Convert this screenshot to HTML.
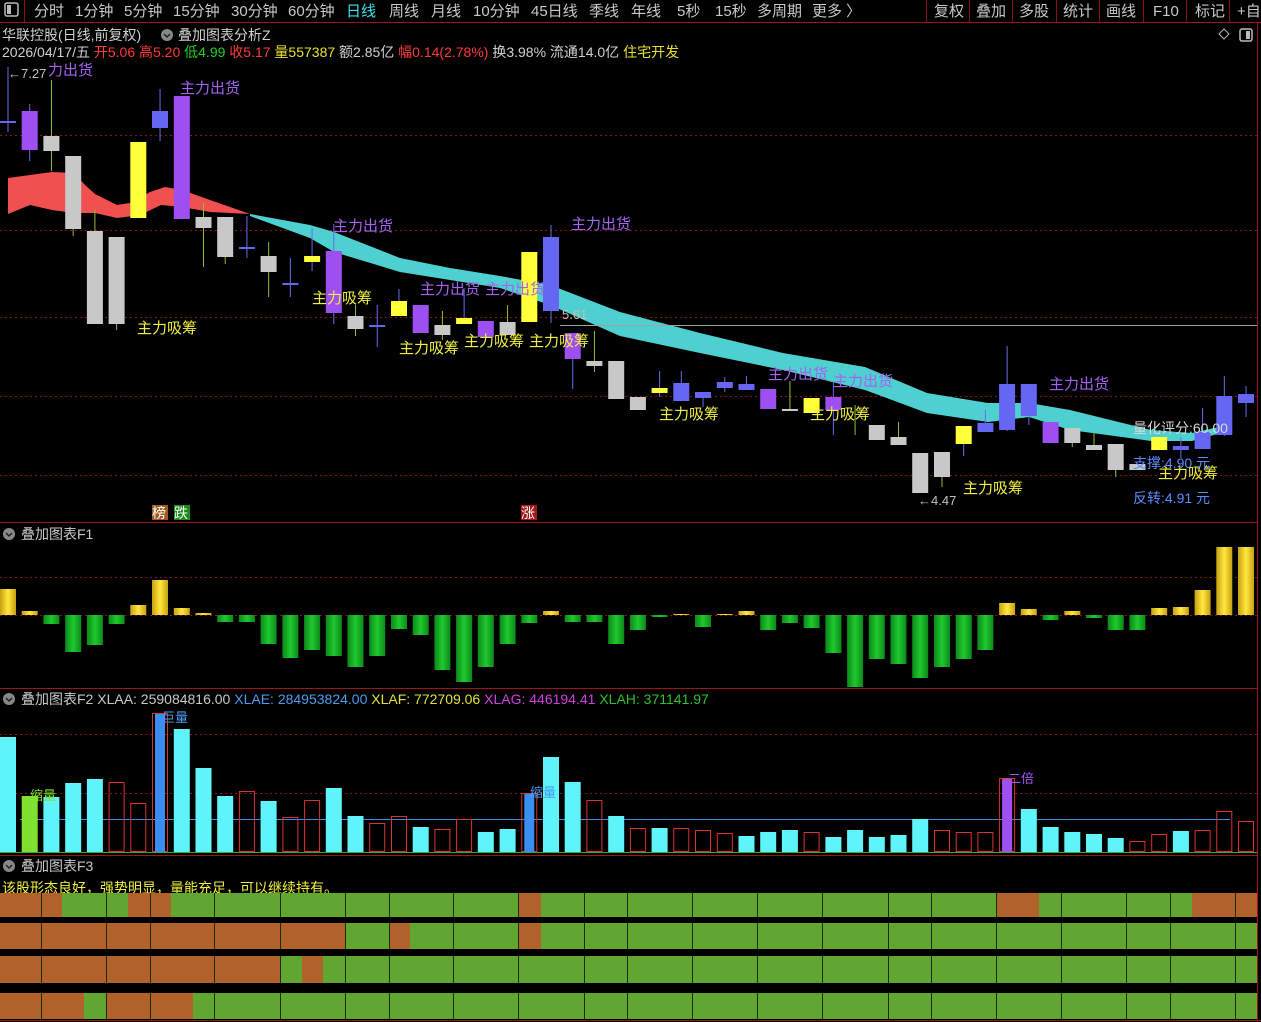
<!DOCTYPE html>
<html><head><meta charset="utf-8">
<style>
html,body{margin:0;padding:0;background:#000;width:1261px;height:1022px;overflow:hidden}
svg{display:block}
text{font-family:"Liberation Sans","Noto Sans CJK SC",sans-serif}
</style></head>
<body>
<svg id="s" width="1261" height="1022" xmlns="http://www.w3.org/2000/svg">
<rect width="1261" height="1022" fill="#000"/>
<!-- toolbar -->
<g font-size="15" fill="#c8c8c8">
<rect x="5" y="3" width="13" height="13" fill="none" stroke="#bbb" stroke-width="1.5" rx="2"/>
<rect x="7" y="5" width="4" height="9" fill="#bbb"/>
<text x="34" y="16">分时</text><text x="75" y="16">1分钟</text><text x="124" y="16">5分钟</text><text x="173" y="16">15分钟</text><text x="231" y="16">30分钟</text><text x="288" y="16">60分钟</text><text x="346" y="16" fill="#40e0f0">日线</text><text x="389" y="16">周线</text><text x="431" y="16">月线</text><text x="473" y="16">10分钟</text><text x="531" y="16">45日线</text><text x="589" y="16">季线</text><text x="631" y="16">年线</text><text x="677" y="16">5秒</text><text x="715" y="16">15秒</text><text x="757" y="16">多周期</text><text x="812" y="16">更多 〉</text>
<text x="934" y="16">复权</text><text x="976" y="16">叠加</text><text x="1019" y="16">多股</text><text x="1063" y="16">统计</text><text x="1106" y="16">画线</text><text x="1153" y="16">F10</text><text x="1195" y="16">标记</text><text x="1237" y="16">+自</text>
</g>
<g stroke="#8a1010" stroke-width="1">
<line x1="24.5" y1="0" x2="24.5" y2="22"/><line x1="926.5" y1="0" x2="926.5" y2="22"/><line x1="969.5" y1="0" x2="969.5" y2="22"/><line x1="1012.5" y1="0" x2="1012.5" y2="22"/><line x1="1056.5" y1="0" x2="1056.5" y2="22"/><line x1="1099.5" y1="0" x2="1099.5" y2="22"/><line x1="1143.5" y1="0" x2="1143.5" y2="22"/><line x1="1186.5" y1="0" x2="1186.5" y2="22"/><line x1="1229.5" y1="0" x2="1229.5" y2="22"/>
<line x1="0" y1="22.5" x2="1261" y2="22.5" stroke="#a01414"/>
<line x1="1257.5" y1="22" x2="1257.5" y2="1022" stroke="#a01414"/>
<line x1="0" y1="522.5" x2="1257" y2="522.5" stroke="#a01414"/>
<line x1="0" y1="688.5" x2="1257" y2="688.5" stroke="#a01414"/>
<line x1="0" y1="855.5" x2="1257" y2="855.5" stroke="#a01414"/>
<line x1="0" y1="1020.5" x2="1261" y2="1020.5" stroke="#a01414"/>
</g>
<g font-size="14">
<text x="2" y="40" fill="#d0d0d0">华联控股(日线,前复权)</text>
<circle cx="167" cy="35" r="6" fill="#888"/><path d="M164 34l3 3 3-3" stroke="#222" stroke-width="1.5" fill="none"/>
<text x="178" y="40" fill="#d0d0d0">叠加图表分析Z</text>
<text x="2" y="57" fill="#d0d0d0">2026/04/17/五 <tspan fill="#ff3a3a">开5.06 高5.20 </tspan><tspan fill="#20d020">低4.99 </tspan><tspan fill="#ff3a3a">收5.17 </tspan><tspan fill="#e8e030">量557387 </tspan><tspan>额2.85亿 </tspan><tspan fill="#ff3a3a">幅0.14(2.78%) </tspan><tspan>换3.98% 流通14.0亿 </tspan><tspan fill="#e8e030">住宅开发</tspan></text>
<path d="M1224 29l5 5-5 5-5-5z" fill="none" stroke="#bbb"/>
<rect x="1240" y="29" width="12" height="12" rx="2" fill="none" stroke="#bbb" stroke-width="1.5"/><rect x="1246" y="31" width="4" height="8" fill="#bbb"/>
</g>
<g id="dyn"></g>
</svg>
<script>
var NS='http://www.w3.org/2000/svg',h='';
function X(i){return 8+i*21.72;}
function r(x,y,w,hh,f,extra){h+='<rect x="'+x.toFixed(1)+'" y="'+y+'" width="'+w+'" height="'+Math.max(hh,1)+'" fill="'+f+'" '+(extra||'')+'/>';}
function ln(x1,y1,x2,y2,c,ex){h+='<line x1="'+x1+'" y1="'+y1+'" x2="'+x2+'" y2="'+y2+'" stroke="'+c+'" '+(ex||'')+'/>';}
function tx(x,y,s,c,fs){h+='<text x="'+x+'" y="'+y+'" fill="'+c+'" font-size="'+(fs||15)+'">'+s+'</text>';}
// grid dotted
[135,230,317,396,475].forEach(function(y){ln(0,y+.5,1257,y+.5,'#8a1414','stroke-dasharray="2,3"');});
[577,615].forEach(function(y){ln(0,y+.5,1257,y+.5,'#8a1414','stroke-dasharray="2,3"');});
[734,793].forEach(function(y){ln(0,y+.5,1257,y+.5,'#8a1414','stroke-dasharray="2,3"');});
// band
h+='<polygon fill="#f05050" points="8,178 30,175 52,172 74,173 85,185 95,194 117,205 130,203 150,192 165,187 182,190 210,200 250,214 210,212 182,207 161,205 140,215 117,218 95,213 74,213 52,210 30,205 8,214"/>';
h+='<polygon fill="#4ecfd0" points="250,214 310,225 334,232 400,258 450,268 500,276 550,285 620,312 700,333 783,353 865,367 927,393 988,403 1029,403 1070,410 1151,430 1192,433 1232,424 1232,430 1192,441 1151,441 1070,430 1029,417 988,422 927,413 865,390 783,370 700,353 620,336 550,305 500,288 450,280 400,272 334,252 310,238 250,216"/>';
ln(560,325.5,1257,325.5,'#a0a0a0');
// candles
var C={W:'#c8c8c8',P:'#9d4ff2',B:'#6566f2',Y:'#ffff3a'};
var WK={W:'#8fbf3a',P:'#6a6af0',B:'#6a6af0',Y:'#6a6af0'};
var K=[['B',122,122,67,132],['P',111,150,104,161],['W',136,151,80,171],['W',156,229,156,236],['W',231,324,210,324],['W',237,324,237,330],['Y',142,218,142,218],['B',111,128,89,141],['P',96,219,96,219],['W',217,228,203,267],['W',217,257,217,264],['B',248,248,216,258],['W',256,272,242,297],['B',284,284,258,297],['Y',256,262,228,271],['P',251,313,224,324],['W',316,329,305,336],['B',326,326,305,347],['Y',301,316,289,316],['P',305,333,305,333],['W',325,335,311,340],['Y',318,324,288,324],['P',321,337,321,337],['W',322,335,305,335],['Y',252,322,252,322],['B',237,311,225,323],['P',333,359,333,389],['W',361,366,331,372],['W',361,399,361,399],['W',397,410,397,410],['Y',388,393,371,397],['B',383,401,371,401],['B',392,398,392,407],['B',382,388,377,392],['B',384,390,376,390],['P',389,409,389,409],['W',410,410,381,410],['Y',398,413,398,413],['P',397,410,381,435],null,['W',425,440,425,440],['W',437,445,422,445],['W',453,493,453,493],['W',452,477,452,487],['Y',426,444,426,456],['B',423,432,410,432],['B',384,430,346,431],['B',384,416,384,425],['P',422,443,422,443],['W',428,443,428,447],['W',445,450,432,450],['W',444,470,444,477],['W',464,470,464,470],['Y',437,450,437,450],['B',446,450,437,458],['B',432,449,408,449],['B',396,435,376,436],['B',394,403,386,417]];
K.forEach(function(k,i){var x=X(i);if(!k){ln(x,405,x,435,'#8fbf3a');return;}
 ln(x,k[3],x,k[4],WK[k[0]]);
 if(k[2]-k[1]<2){r(x-8,k[1]-1,16,2,C[k[0]]);} else r(x-8,k[1],16,k[2]-k[1],C[k[0]]);});
// labels
var pu='#a463f0',ye='#f0f040';
[[48,75,'力出货'],[180,93,'主力出货'],[333,231,'主力出货'],[571,229,'主力出货'],[420,294,'主力出货'],[485,294,'主力出货'],[768,379,'主力出货'],[833,386,'主力出货'],[1049,389,'主力出货']].forEach(function(a){tx(a[0],a[1],a[2],pu);});
[[137,333,'主力吸筹'],[312,303,'主力吸筹'],[399,353,'主力吸筹'],[464,346,'主力吸筹'],[529,346,'主力吸筹'],[659,419,'主力吸筹'],[810,419,'主力吸筹'],[963,493,'主力吸筹'],[1158,478,'主力吸筹']].forEach(function(a){tx(a[0],a[1],a[2],ye);});
tx(8,78,'←7.27','#c0c0c0',13);tx(562,319,'5.61','#c0c0c0',13);tx(918,505,'←4.47','#c0c0c0',13);
tx(1133,433,'量化评分:60.00','#d8d8d8',14);tx(1133,468,'支撑:4.90 元','#5a8cff',14);tx(1133,503,'反转:4.91 元','#5a8cff',14);
r(152,505,16,15,'#a05a20');tx(152,518,'榜','#fff',14);r(174,505,16,15,'#1a8a1a');tx(174,518,'跌','#fff',14);r(521,505,16,15,'#a01818');tx(521,518,'涨','#fff',14);
// panel titles
function ttl(y,s){h+='<circle cx="9" cy="'+(y-5)+'" r="6" fill="#888"/><path d="M6 '+(y-6)+'l3 3 3-3" stroke="#222" stroke-width="1.5" fill="none"/>';tx(21,y,s,'#c8c8c8',14);}
ttl(539,'叠加图表F1');ttl(871,'叠加图表F3');
h+='<text x="21" y="704" font-size="14" fill="#c8c8c8">叠加图表F2 XLAA: 259084816.00 <tspan fill="#4a9cf0">XLAE: 284953824.00 </tspan><tspan fill="#e0e040">XLAF: 772709.06 </tspan><tspan fill="#d040e0">XLAG: 446194.41 </tspan><tspan fill="#30c030">XLAH: 371141.97</tspan></text>';
h+='<circle cx="9" cy="699" r="6" fill="#888"/><path d="M6 698l3 3 3-3" stroke="#222" stroke-width="1.5" fill="none"/>';
// F1
h+='<defs><linearGradient id="gy" x1="0" x2="1"><stop offset="0" stop-color="#c8a010"/><stop offset=".5" stop-color="#ffe840"/><stop offset="1" stop-color="#c8a010"/></linearGradient><linearGradient id="gg" x1="0" x2="1"><stop offset="0" stop-color="#0a8a18"/><stop offset=".5" stop-color="#20c830"/><stop offset="1" stop-color="#0a8a18"/></linearGradient></defs>';
var F1=[589,611,624,652,645,624,605,580,608,613,622,622,644,658,650,656,667,656,629,635,670,682,667,644,623,611,622,622,644,630,617,614,627,614,611,630,623,628,653,687,659,664,678,667,659,650,603,609,620,611,618,630,630,608,607,590,547,547];
F1.forEach(function(v,i){var x=X(i);if(v<615)r(x-8,v,16,615-v,'url(#gy)');else r(x-8,615,16,v-615,'url(#gg)');});
// F2
ln(20,819.5,1230,819.5,'#3a8ee0');ln(0,852.5,1257,852.5,'#30b030');
var F2=[[737,'c'],[796,'g'],[797,'c'],[783,'c'],[779,'c'],[782,'r'],[803,'r'],[713,'b'],[729,'c'],[768,'c'],[796,'c'],[791,'r'],[801,'c'],[817,'r'],[800,'r'],[788,'c'],[816,'c'],[823,'r'],[816,'r'],[827,'c'],[829,'r'],[819,'r'],[832,'c'],[829,'c'],[793,'b'],[757,'c'],[782,'c'],[800,'r'],[816,'c'],[828,'r'],[828,'c'],[828,'r'],[830,'r'],[833,'r'],[836,'c'],[832,'c'],[830,'c'],[832,'r'],[837,'c'],[830,'c'],[837,'c'],[835,'c'],[819,'c'],[830,'r'],[832,'r'],[832,'r'],[778,'p'],[809,'c'],[827,'c'],[832,'c'],[834,'c'],[838,'c'],[841,'r'],[834,'r'],[831,'c'],[830,'r'],[811,'r'],[821,'r']];
F2.forEach(function(a,i){var x=X(i),y=a[0],t=a[1],hh=852-y;
 if(t=='c')r(x-8,y,16,hh,'#5ef4fa');
 else if(t=='g')r(x-8,y,16,hh,'#80e030');
 else if(t=='r')r(x-7.5,y+.5,15,hh-1,'none','stroke="#e03030"');
 else {r(x-7.5,y+.5,15,hh-1,'none','stroke="#e03030"');r(x-5,y+1,10,hh-1,t=='b'?'#3a8ef0':'#a050f0');}});
tx(30,800,'缩量','#80e030',13);tx(530,797,'缩量','#4a9cf0',13);tx(162,722,'巨量','#4a9cf0',13);tx(1008,783,'二倍','#a050f0',13);
// F3
tx(2,893,'该股形态良好，强势明显，量能充足，可以继续持有。','#f0f040',14);
var G='#62a632',Bn='#b0622a';
var rows=[[893,917],[923,949],[956,983],[993,1019]];
var br=[[[0,62],[128,171],[519,541],[996,1039],[1192,1257]],[[0,345],[389,410],[519,541]],[[0,280],[302,323]],[[0,84],[106,193]]];
rows.forEach(function(rw,j){r(0,rw[0],1257,rw[1]-rw[0],G);br[j].forEach(function(b){r(b[0],rw[0],b[1]-b[0],rw[1]-rw[0],Bn);});
 [41,106,150,214,280,345,389,453,518,584,627,692,757,822,888,931,996,1061,1126,1170,1235].forEach(function(s){ln(s+.5,rw[0],s+.5,rw[1],'#1a2a0a');});});
document.getElementById('dyn').innerHTML=h;
</script>
</body></html>
